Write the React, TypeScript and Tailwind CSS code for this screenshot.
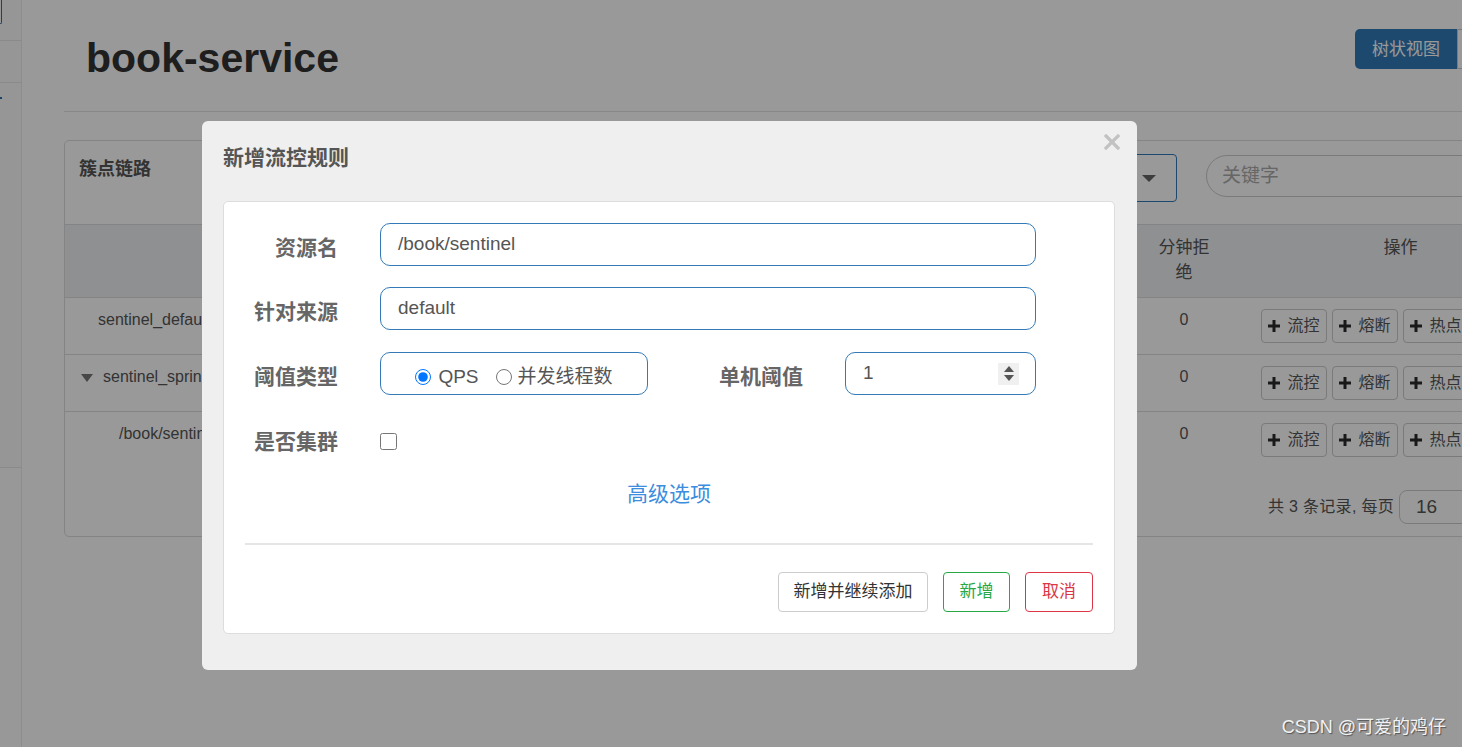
import React from "react";

function PlusIcon() {
  return (
    <svg width="12" height="12" viewBox="0 0 12 12" className="shrink-0">
      <path d="M4.5 0h3v4.5H12v3H7.5V12h-3V7.5H0v-3h4.5z" fill="#2a2a2a" />
    </svg>
  );
}

function OpButtons() {
  const items = ["流控", "熔断", "热点", "授权"];
  return (
    <div className="flex justify-center gap-[5px]">
      {items.map((t) => (
        <div
          key={t}
          className="w-[66px] h-[34px] shrink-0 border border-[#ccc] rounded-[4px] bg-white flex items-center justify-center gap-[7px] text-[16px] leading-[20px] text-[#555]"
        >
          <PlusIcon />
          <span>{t}</span>
        </div>
      ))}
    </div>
  );
}

function TableRow({
  name,
  indent,
  arrow,
  border,
}: {
  name: string;
  indent: string;
  arrow?: boolean;
  border?: boolean;
}) {
  return (
    <div className={"flex h-[57px] " + (border ? "border-b border-[#ddd]" : "")}>
      <div className={"w-[300px] pt-[11px] text-[16px] leading-[22px] text-[#555] whitespace-nowrap flex items-start " + indent}>
        {arrow && (
          <svg width="12" height="8" viewBox="0 0 12 8" className="mt-[8px] mr-[10px] shrink-0">
            <path d="M0 0h12L6 8z" fill="#777" />
          </svg>
        )}
        <span>{name}</span>
      </div>
      <div className="flex-1" />
      <div className="w-[88px] pt-[11px] text-center text-[16px] leading-[22px] text-[#555]">0</div>
      <div className="w-[345px] pt-[11px]">
        <OpButtons />
      </div>
    </div>
  );
}

export default function App() {
  return (
    <div className="relative w-[1462px] h-[747px] overflow-hidden bg-white font-['Liberation_Sans','Noto_Sans_CJK_SC',sans-serif]">
      <div className="flex h-full">
        {/* sidebar */}
        <aside className="w-[22px] shrink-0 h-full border-r border-[#ebebeb] bg-[#fafafa] flex flex-col">
          <div className="h-[41px] border-b border-[#e6e6e6] relative">
            <div className="absolute left-0 top-0 w-[2px] h-[24px] border-r border-b border-[#2e6bb0] rounded-br-[2px]" />
          </div>
          <div className="h-[42px] border-b border-[#e6e6e6]" />
          <div className="h-[385px] border-b border-[#e6e6e6] relative">
            <div className="absolute left-0 top-[14px] w-[2px] h-[2px] bg-[#2e6bb0]" />
          </div>
          <div className="flex-1 bg-[#fdfdfd]" />
        </aside>

        {/* main */}
        <main className="shrink-0 w-[1510px] ml-[42px]">
          <div className="flex items-start h-[112px] border-b border-[#e3e3e3]">
            <h1 className="ml-[22px] mt-[36px] text-[41px] leading-[44px] font-bold text-[#333]">
              book-service
            </h1>
            <div className="ml-auto mt-[29px] flex">
              <div className="w-[102px] h-[40px] bg-[#337ab7] text-white text-[17px] rounded-l-[5px] flex items-center justify-center pt-[1px]">
                树状视图
              </div>
              <div className="w-[117px] h-[40px] bg-white border border-[#ccc] text-[#333] text-[17px] rounded-r-[5px] flex items-center justify-center">
                列表视图
              </div>
            </div>
          </div>

          <div className="mt-[28px] border border-[#ddd] rounded-[5px]">
            <div className="flex items-start h-[84px] border-b border-[#ddd] px-[15px]">
              <div className="mt-[16px] -ml-[1px] text-[18px] leading-[24px] font-bold text-[#555]">簇点链路</div>
              <div className="ml-auto mt-[13px] w-[240px] h-[48px] border border-[#337ab7] rounded-[4px] flex items-center justify-end pr-[20px]">
                <svg width="14" height="7" viewBox="0 0 14 7">
                  <path d="M0 0h14L7 7z" fill="#666" />
                </svg>
              </div>
              <div className="ml-[29px] mt-[14px] w-[352px] h-[42px] border border-[#ccc] rounded-[21px] pl-[15px] text-[19px] leading-[40px] text-[#aaa]">
                关键字
              </div>
            </div>

            <div className="flex h-[73px] bg-[#eef0f3] border-b border-[#ddd] text-[17px] leading-[25px] text-[#555]">
              <div className="w-[300px]" />
              <div className="flex-1 pt-[10px] flex justify-around">
                <span>资源名</span>
                <span>通过QPS</span>
                <span>拒绝QPS</span>
                <span>并发数</span>
              </div>
              <div className="w-[88px] px-[16px] pt-[10px] text-center">分钟拒绝</div>
              <div className="w-[345px] pt-[10px] text-center">操作</div>
            </div>

            <TableRow name="sentinel_default_context" indent="pl-[33px]" border />
            <TableRow name="sentinel_spring_web_context" indent="pl-[16px]" arrow border />
            <TableRow name="/book/sentinel" indent="pl-[54px]" />

            <div className="flex justify-end items-center pt-[21px] pb-[12px] pr-[104px]">
              <span className="text-[16px] leading-[22px] text-[#555] tracking-[0.3px]">共 3 条记录, 每页</span>
              <div className="ml-[5px] w-[70px] h-[34px] border border-[#ccc] rounded-[8px] pl-[16px] text-[19px] leading-[32px] text-[#555]">
                16
              </div>
            </div>
          </div>
        </main>
      </div>

      {/* overlay */}
      <div className="absolute inset-0 bg-black/40" />

      {/* modal */}
      <div className="absolute left-[202px] top-[121px] w-[935px] bg-[#efefef] rounded-[6px] pt-[23px] pl-[21px] pr-[22px] pb-[36px]">
        <svg
          width="16"
          height="16"
          viewBox="0 0 16 16"
          className="absolute left-[902px] top-[13px]"
        >
          <path d="M2 2L14 14M14 2L2 14" stroke="#c2c2c2" strokeWidth="3.2" strokeLinecap="square" />
        </svg>
        <div className="h-[28px] leading-[28px] text-[21px] font-bold text-[#555]">新增流控规则</div>

        <div className="mt-[29px] bg-white border border-[#ddd] rounded-[5px] pt-[21px] px-[21px] pb-[21px]">
          {/* row 1 */}
          <div className="flex items-start">
            <div className="w-[93px] text-right pt-[11px] leading-[28px] text-[21px] font-bold text-[#666]">资源名</div>
            <div className="ml-[42px] w-[656px] h-[43px] border border-[#337ab7] rounded-[10px] px-[17px] flex items-center text-[19px] text-[#555]">
              /book/sentinel
            </div>
          </div>
          {/* row 2 */}
          <div className="flex items-start mt-[21px]">
            <div className="w-[93px] text-right pt-[11px] leading-[28px] text-[21px] font-bold text-[#666]">针对来源</div>
            <div className="ml-[42px] w-[656px] h-[43px] border border-[#337ab7] rounded-[10px] px-[17px] flex items-center text-[19px] text-[#555]">
              default
            </div>
          </div>
          {/* row 3 */}
          <div className="flex items-start mt-[22px]">
            <div className="w-[93px] text-right pt-[11px] leading-[28px] text-[21px] font-bold text-[#666]">阈值类型</div>
            <div className="ml-[42px] w-[268px] h-[43px] border border-[#337ab7] rounded-[10px] flex items-center justify-center pt-[6px] text-[19px] text-[#555]">
              <label className="flex items-center">
                <input type="radio" name="grade" defaultChecked className="m-0 w-[16px] h-[16px]" />
                <span className="ml-[7px] leading-[24px]">QPS</span>
              </label>
              <label className="flex items-center ml-[17px]">
                <input type="radio" name="grade" className="m-0 w-[16px] h-[16px]" />
                <span className="ml-[6px] leading-[24px]">并发线程数</span>
              </label>
            </div>
            <div className="w-[155px] text-right pt-[11px] leading-[28px] text-[21px] font-bold text-[#666]">单机阈值</div>
            <div className="ml-[42px] w-[191px] h-[43px] border border-[#337ab7] rounded-[10px] pl-[17px] pr-[16px] flex items-center text-[19px] text-[#555]">
              <span className="flex-1">1</span>
              <div className="w-[21px] h-[22px] bg-[#f0f0f0] flex flex-col items-center justify-center gap-[3px]">
                <svg width="10" height="6" viewBox="0 0 10 6">
                  <path d="M5 0L10 6H0z" fill="#555" />
                </svg>
                <svg width="10" height="6" viewBox="0 0 10 6">
                  <path d="M0 0h10L5 6z" fill="#555" />
                </svg>
              </div>
            </div>
          </div>
          {/* row 4 */}
          <div className="flex items-start mt-[22px] h-[43px]">
            <div className="w-[93px] text-right pt-[11px] leading-[28px] text-[21px] font-bold text-[#666]">是否集群</div>
            <input type="checkbox" className="ml-[42px] mt-[16px] w-[17px] h-[17px]" />
          </div>

          <div className="mt-[20px] text-center text-[21px] leading-[28px] text-[#3c8dde]">高级选项</div>

          <div className="mt-[35px] h-[2px] bg-[#e5e5e5]" />

          <div className="mt-[27px] flex justify-end gap-[15px]">
            <div className="w-[150px] h-[40px] border border-[#ccc] rounded-[4px] flex items-center justify-center text-[17px] text-[#333] bg-white">
              新增并继续添加
            </div>
            <div className="w-[67px] h-[40px] border border-[#28a745] rounded-[4px] flex items-center justify-center text-[17px] text-[#28a745] bg-white">
              新增
            </div>
            <div className="w-[68px] h-[40px] border border-[#dc3545] rounded-[4px] flex items-center justify-center text-[17px] text-[#dc3545] bg-white">
              取消
            </div>
          </div>
        </div>
      </div>

      {/* watermark */}
      <div className="absolute right-[16px] bottom-[8px] text-[18px] leading-[24px] text-[#f2f2f2] [text-shadow:1px_1px_1px_rgba(0,0,0,0.45)]">
        CSDN @可爱的鸡仔
      </div>
    </div>
  );
}
